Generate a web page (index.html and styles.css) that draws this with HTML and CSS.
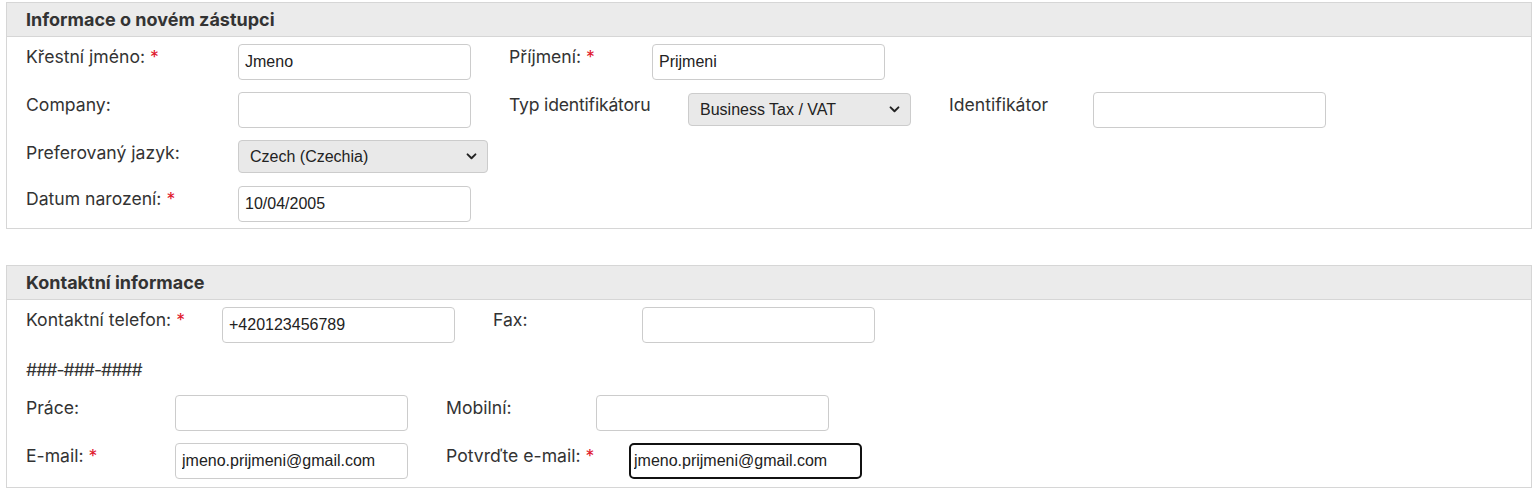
FILE: index.html
```html
<!DOCTYPE html>
<html lang="cs">
<head>
<meta charset="utf-8">
<title>Informace o novém zástupci</title>
<link rel="stylesheet" href="styles.css">
</head>
<body>
<div class="page">
  <section class="panel panel-rep">
    <div class="panel-head">Informace o novém zástupci</div>
    <div class="panel-body">
      <div class="row">
        <label class="lbl w212">Křestní jméno: <span class="req">*</span></label>
        <input class="field" type="text" value="Jmeno">
        <label class="lbl w143 ml">Příjmení: <span class="req">*</span></label>
        <input class="field" type="text" value="Prijmeni">
      </div>
      <div class="row">
        <label class="lbl w212">Company:</label>
        <input class="field" type="text" value="">
        <label class="lbl w179 ml">Typ identifikátoru</label>
        <div class="select select-inline w223"><span>Business Tax / VAT</span><svg class="chev" viewBox="0 0 12 8" width="11" height="7"><path d="M1.5 1.5 L6 6 L10.5 1.5" fill="none" stroke="#222" stroke-width="2.2" stroke-linecap="round" stroke-linejoin="round"/></svg></div>
        <label class="lbl w144 ml">Identifikátor</label>
        <input class="field" type="text" value="">
      </div>
      <div class="row row-select">
        <label class="lbl w212">Preferovaný jazyk:</label>
        <div class="select w250"><span>Czech (Czechia)</span><svg class="chev" viewBox="0 0 12 8" width="11" height="7"><path d="M1.5 1.5 L6 6 L10.5 1.5" fill="none" stroke="#222" stroke-width="2.2" stroke-linecap="round" stroke-linejoin="round"/></svg></div>
      </div>
      <div class="row last">
        <label class="lbl w212">Datum narození: <span class="req">*</span></label>
        <input class="field" type="text" value="10/04/2005">
      </div>
    </div>
  </section>

  <section class="panel panel-contact">
    <div class="panel-head">Kontaktní informace</div>
    <div class="panel-body">
      <div class="row">
        <label class="lbl w196">Kontaktní telefon: <span class="req">*</span></label>
        <input class="field" type="text" value="+420123456789">
        <label class="lbl w149 ml">Fax:</label>
        <input class="field" type="text" value="">
      </div>
      <div class="hint">###-###-####</div>
      <div class="row">
        <label class="lbl w149">Práce:</label>
        <input class="field" type="text" value="">
        <label class="lbl w150 ml">Mobilní:</label>
        <input class="field" type="text" value="">
      </div>
      <div class="row last">
        <label class="lbl w149">E-mail: <span class="req">*</span></label>
        <input class="field" type="text" value="jmeno.prijmeni@gmail.com">
        <label class="lbl w183 ml">Potvrďte e-mail: <span class="req">*</span></label>
        <input class="field focused" type="text" value="jmeno.prijmeni@gmail.com">
      </div>
    </div>
  </section>
</div>
</body>
</html>
```

FILE: styles.css
```css
* { box-sizing: border-box; }

html, body {
  margin: 0;
  padding: 0;
  background: #ffffff;
}

body {
  font-family: Inter, "Liberation Sans", Arial, sans-serif;
  color: #333333;
}

.page {
  padding: 2px 6px 0 6px;
}

.panel {
  border: 1px solid #d6d6d6;
  background: #ffffff;
}

.panel-contact {
  margin-top: 36px;
}

.panel-head {
  background: #ebebeb;
  border-bottom: 1px solid #d6d6d6;
  height: 34px;
  line-height: 34px;
  padding-left: 19px;
  font-weight: 700;
  font-size: 18px;
  color: #333333;
}

.panel-body {
  padding: 2px 0 6px 19px;
}

.panel-contact .panel-body {
  padding-bottom: 8px;
}

.row {
  display: flex;
  align-items: flex-start;
  margin-bottom: 7px;
}

.row.row-select {
  margin-bottom: 8px;
}

.row.last {
  margin-bottom: 0;
}

.lbl {
  flex: none;
  padding-top: 6px;
  font-size: 17.6px;
  line-height: 24px;
  color: #333333;
  white-space: nowrap;
}

.w179 {
  letter-spacing: -0.2px;
}

.req {
  color: #e0182d;
}

.ml { margin-left: 38px; }

.w143 { width: 143px; }
.w144 { width: 144px; }
.w149 { width: 149px; }
.w150 { width: 150px; }
.w179 { width: 179px; }
.w183 { width: 183px; }
.w196 { width: 196px; }
.w212 { width: 212px; }

.field {
  flex: none;
  width: 233px;
  height: 36px;
  margin: 5px 0 0 0;
  padding: 0 6px;
  border: 1px solid #cccccc;
  border-radius: 4px;
  background: #ffffff;
  font-family: "Liberation Sans", Arial, sans-serif;
  font-size: 16px;
  color: #222222;
  outline: none;
}

.field.focused {
  border: 2px solid #111111;
  border-radius: 5px;
  padding: 0 3px;
}

.select {
  flex: none;
  display: flex;
  align-items: center;
  justify-content: space-between;
  height: 33px;
  margin-top: 5px;
  padding: 0 10px 0 11px;
  border: 1px solid #cccccc;
  border-radius: 4px;
  background: #e9e9e9;
  font-family: "Liberation Sans", Arial, sans-serif;
  font-size: 16px;
  color: #222222;
}

.select-inline {
  margin-top: 6px;
}

.w223 { width: 223px; }
.w250 { width: 250px; }

.chev {
  flex: none;
  display: block;
}

.hint {
  padding: 8px 0 8px 0;
  font-size: 17.6px;
  line-height: 24px;
  letter-spacing: -1px;
  color: #333333;
}
```
